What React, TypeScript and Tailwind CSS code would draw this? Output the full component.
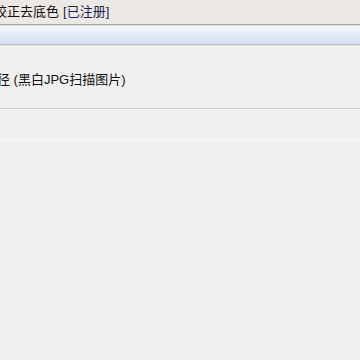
import React from 'react';

const App: React.FC = () => {
  return (
    <div
      className="w-[360px] h-[360px] overflow-hidden bg-[#f0f0f0] flex flex-col"
      style={{ fontFamily: '"Liberation Sans", "Noto Sans CJK SC", sans-serif' }}
    >
      {/* Title bar */}
      <div className="h-[24px] bg-[#ebe8e6] flex items-center -ml-[6px] text-[13px] text-[#111] whitespace-nowrap">
        <span>校正去底色 </span>
        <span className="ml-[4px] text-[#1c1c50]">[已注册]</span>
      </div>
      <div className="h-[1px] bg-[#a8a8a8]" />
      <div className="h-[1px] bg-[#dcdcdc]" />

      {/* Blue band */}
      <div className="h-[18px] bg-gradient-to-b from-[#f5f8fd] to-[#d5ddf0]" />
      <div className="h-[1px] bg-[#b9bfcc]" />
      <div className="h-[1px] bg-[#e4e4e4]" />

      {/* Option row */}
      <div className="h-[62px] flex items-center -ml-[3px] pt-[6px] text-[13px] text-[#111] whitespace-nowrap">
        径 (黑白JPG扫描图片)
      </div>
      <div className="h-[1px] bg-[#cfd1d2]" />
      <div className="h-[1px] bg-[#fafafa]" />

      <div className="h-[29px]" />
      <div className="h-[1px] bg-[#f8f8f8]" />
      <div className="flex-1" />
    </div>
  );
};

export default App;
